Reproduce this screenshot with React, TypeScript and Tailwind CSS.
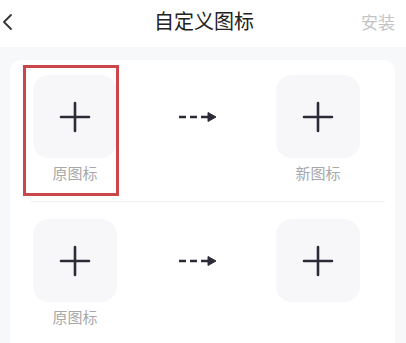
import React from "react"

const font = { fontFamily: '"Noto Sans CJK SC", "Noto Sans", sans-serif' }

function Plus() {
  return (
    <svg width="32" height="32" viewBox="0 0 32 32" fill="none">
      <path d="M16 2v28M2 16h28" stroke="#2c2c38" strokeWidth="2.6" strokeLinecap="round" />
    </svg>
  )
}

function DashArrow() {
  return (
    <svg width="40" height="12" viewBox="0 0 40 12" fill="none">
      <path d="M1 6h7M12 6h7M23 6h7" stroke="#2c2c38" strokeWidth="2.6" />
      <path d="M30 1.5L38 6L30 10.5Z" fill="#2c2c38" stroke="#2c2c38" strokeWidth="1" strokeLinejoin="round" />
    </svg>
  )
}

function IconSlot({ label, highlight }: { label?: string; highlight?: boolean }) {
  return (
    <div className="relative flex flex-col items-center w-[84px]">
      {highlight && (
        <div className="absolute left-[-10px] top-[-10px] w-[96px] h-[131px] border-[3px] border-[#c9474a]" />
      )}
      <div className="w-[84px] h-[83px] rounded-[16px] bg-[#f7f7fa] flex items-center justify-center">
        <Plus />
      </div>
      <div className="mt-[4px] h-[22px] text-[15px] leading-[22px] text-[#a8a8aa]">{label}</div>
    </div>
  )
}

function Row({ left, right, highlight }: { left: string; right?: string; highlight?: boolean }) {
  return (
    <div className="flex items-start pl-[23px] pr-[35px]">
      <IconSlot label={left} highlight={highlight} />
      <div className="flex-1 flex justify-center pt-[36px] pl-[3px]">
        <DashArrow />
      </div>
      <IconSlot label={right} />
    </div>
  )
}

export default function App() {
  return (
    <div className="w-[406px] h-[343px] bg-[#f7f8fa] overflow-hidden" style={font}>
      <div className="h-[47px] bg-white flex items-center justify-between px-[1px] relative">
        <svg width="14" height="18" viewBox="0 0 14 18" fill="none" className="mb-[4px]">
          <path d="M10 2L3 9l7 7" stroke="#333" strokeWidth="1.8" strokeLinecap="round" strokeLinejoin="round" />
        </svg>
        <div className="absolute left-0 right-0 top-[6px] pl-[2px] text-center text-[20px] leading-[30px] text-[#222] pointer-events-none">
          自定义图标
        </div>
        <div className="mr-[10px] mb-[3px] text-[17px] text-[#c4c4c6]">安装</div>
      </div>
      <div className="mt-[13px] ml-[10px] mr-[11px] bg-white rounded-t-[12px] h-[300px]">
        <div className="pt-[15px] pb-[17px]">
          <Row left="原图标" right="新图标" highlight />
        </div>
        <div className="ml-[20px] mr-[10px] h-px bg-[#f2f2f4]" />
        <div className="pt-[17px]">
          <Row left="原图标" />
        </div>
      </div>
    </div>
  )
}
